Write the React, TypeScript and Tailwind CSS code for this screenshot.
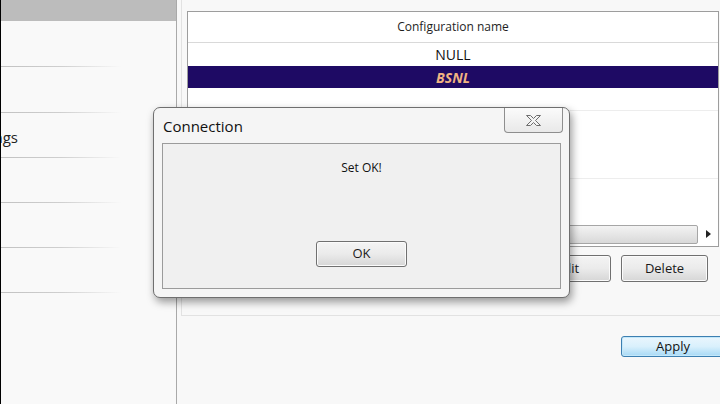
import React from "react";

const font = { fontFamily: '"Open Sans", "Noto Sans", "Liberation Sans", sans-serif' };

function Btn({ label, className = "" }: { label: string; className?: string }) {
  return (
    <div
      className={
        "flex shrink-0 items-center justify-center rounded-[3px] border border-[#707070] bg-linear-to-b from-[#f4f4f4] via-[#ebebeb] to-[#d6d6d6] text-[13px] text-[#1a1a1a] shadow-[inset_0_0_0_1px_#fbfbfb] " +
        className
      }
    >
      {label}
    </div>
  );
}

export default function App() {
  const leftRows = [46, 46, 45, 45, 45, 45];
  return (
    <div className="relative flex h-[404px] w-[720px] overflow-hidden bg-[#f8f8f8]" style={font}>
      {/* black edge */}
      <div className="w-px shrink-0 bg-black" />

      {/* left navigation panel */}
      <div className="flex w-[175px] shrink-0 flex-col bg-[#f9f9f9]">
        <div className="h-[21px] bg-[#bcbcbc]" />
        {leftRows.map((h, i) => (
          <div key={i} className="flex flex-col" style={{ height: h }}>
            <div className="flex flex-1 items-center">
              {i === 2 && (
                <div className="flex w-[17px] justify-end overflow-hidden whitespace-nowrap pt-[5px] text-[15px] text-[#222]">
                  Settings
                </div>
              )}
            </div>
            <div className="h-px w-[120px] bg-linear-to-r from-[#c2c2c2] via-[#cfcfcf] to-transparent" />
          </div>
        ))}
      </div>

      {/* right panel */}
      <div className="flex min-w-0 flex-1 flex-col overflow-hidden border-l border-[#a9a9a9] bg-[#f8f8f8]">
        <div className="ml-[4px] flex h-[316px] flex-col border-b border-l border-[#e2e2e2] pl-[5px] pt-[11px]">
          {/* table */}
          <div className="flex h-[236px] w-[532px] shrink-0 flex-col border border-[#9d9d9d] bg-white">
            <div className="flex h-[31px] items-center justify-center border-b border-[#d9d9d9] text-[12px] text-[#1e1e1e]">
              Configuration name
            </div>
            <div className="flex h-[23px] items-center justify-center text-[14px] text-[#111]">NULL</div>
            <div className="flex h-[22px] items-center justify-center bg-[#1e0a64] text-[14px] font-bold italic text-[#f0b482]">
              BSNL
            </div>
            <div className="h-[23px] border-b border-[#ededed]" />
            <div className="h-[68px] border-b border-[#ededed]" />
            <div className="h-[45px]" />
            {/* horizontal scrollbar */}
            <div className="flex h-[20px] items-center">
              <div className="ml-[20px] h-[19px] flex-1 rounded-[2px] border border-[#a6a6a6] bg-linear-to-b from-[#f3f3f3] via-[#e6e6e6] to-[#d9d9d9]" />
              <div className="flex w-[20px] items-center justify-center">
                <svg width="5" height="8" viewBox="0 0 5 8">
                  <path d="M0 0 L5 4 L0 8 Z" fill="#222" />
                </svg>
              </div>
            </div>
          </div>
          {/* buttons */}
          <div className="mt-[8px] flex justify-end gap-[10px] pr-[12px]">
            <Btn label="Edit" className="h-[27px] w-[87px]" />
            <Btn label="Delete" className="h-[27px] w-[87px]" />
          </div>
        </div>
        <div className="mt-[20px] flex pl-[444px]">
          <div className="flex h-[21px] w-[104px] shrink-0 items-center justify-center rounded-[3px] border border-[#3c7fb1] bg-linear-to-b from-[#eaf6fd] via-[#d9f0fc] to-[#a7d9f5] text-[13px] text-[#111] shadow-[inset_0_0_0_1px_#c4e8fa]">
            Apply
          </div>
        </div>
      </div>

      {/* modal dialog */}
      <div className="absolute left-[153px] top-[107px] flex h-[191px] w-[417px] flex-col rounded-[7px] border border-[#6f6f6f] bg-[#f5f5f5] px-[8px] pb-[8px] shadow-[2px_4px_9px_rgba(0,0,0,0.4)]">
        <div className="flex h-[35px] items-center pl-[1px] pt-[2px] text-[15px] text-[#111]">Connection</div>
        <div className="absolute right-[6px] top-0 flex h-[25px] w-[59px] items-center justify-center rounded-b-[4px] border border-t-0 border-[#8e8e8e] bg-linear-to-b from-[#fbfbfb] to-[#e9e9e9]">
          <svg width="17" height="13" viewBox="0 0 17 13">
            <path
              d="M1.5 1.5 L5.5 1.5 L8.5 4.5 L11.5 1.5 L15.5 1.5 L10.5 6.5 L15.5 11.5 L11.5 11.5 L8.5 8.5 L5.5 11.5 L1.5 11.5 L6.5 6.5 Z"
              fill="#f4f4f4"
              stroke="#6d6d6d"
              strokeWidth="1"
              strokeLinejoin="round"
            />
          </svg>
        </div>
        <div className="flex flex-1 flex-col items-center border border-[#9b9b9b] bg-[#f0f0f0]">
          <div className="mt-[15px] h-[17px] text-[12px] leading-[17px] text-[#111]">Set OK!</div>
          <Btn label="OK" className="mt-[65px] h-[26px] w-[91px] text-[12px]" />
        </div>
      </div>
    </div>
  );
}
